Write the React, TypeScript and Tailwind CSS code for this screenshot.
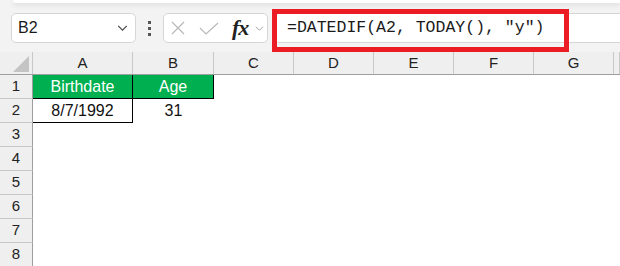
import React from "react";

const cols = [
  { label: "A", w: "w-[100px]" },
  { label: "B", w: "w-[81px]" },
  { label: "C", w: "w-[80px]" },
  { label: "D", w: "w-[80px]" },
  { label: "E", w: "w-[80px]" },
  { label: "F", w: "w-[80px]" },
  { label: "G", w: "w-[80px]" },
  { label: "", w: "flex-1" },
];

const rows = [1, 2, 3, 4, 5, 6, 7, 8];

function Chevron({ className }: { className?: string }) {
  return (
    <svg viewBox="0 0 12 7" className={className} fill="none" stroke="currentColor" strokeWidth="1.3">
      <path d="M1 1l5 5 5-5" />
    </svg>
  );
}

function Cell({ row, col }: { row: number; col: number }) {
  // only A1:B2 hold data, gridlines are off
  if (row === 1 && col === 0)
    return (
      <div className="w-[100px] h-full bg-[#00b050] text-white border-r border-b border-black flex items-center justify-center">
        Birthdate
      </div>
    );
  if (row === 1 && col === 1)
    return (
      <div className="w-[81px] h-full bg-[#00b050] text-white border-r border-b border-black flex items-center justify-center">
        Age
      </div>
    );
  if (row === 2 && col === 0)
    return (
      <div className="w-[100px] h-full border-r border-b border-black flex items-center justify-center text-[#111]">
        8/7/1992
      </div>
    );
  if (row === 2 && col === 1)
    return <div className="w-[81px] h-full flex items-center justify-center text-[#111]">31</div>;
  return <div className={`${cols[col].w} h-full`} />;
}

export default function App() {
  return (
    <div className="w-[620px] h-[266px] overflow-hidden bg-[#f3f3f3] font-['Liberation_Sans',Arial,sans-serif] relative">
      {/* ribbon edge */}
      <div className="ml-[13px] h-[3px] bg-white rounded-bl-md shadow-[0_2px_5px_rgba(0,0,0,0.12)]" />

      {/* formula toolbar */}
      <div className="h-[49px] pt-[10px] flex items-start">
        <div className="ml-[11px] w-[125px] h-[30px] bg-white border border-[#d6d6d6] rounded-[5px] flex items-center pl-[6px] pr-[7px]">
          <span className="text-[16px] text-[#1a1a1a] flex-1">B2</span>
          <Chevron className="w-[11px] h-[6px] text-[#444]" />
        </div>
        <div className="w-[27px] h-[30px] flex flex-col items-center justify-center gap-[3px]">
          <span className="w-[3px] h-[3px] bg-[#555]" />
          <span className="w-[3px] h-[3px] bg-[#555]" />
          <span className="w-[3px] h-[3px] bg-[#555]" />
        </div>
        <div className="w-[105px] h-[30px] bg-white border border-[#d6d6d6] rounded-[5px] flex items-center pl-[7px]">
          <svg viewBox="0 0 14 14" className="w-[14px] h-[14px]" stroke="#b9b9b9" strokeWidth="1.2">
            <path d="M1 1l12 12M13 1L1 13" />
          </svg>
          <svg viewBox="0 0 20 13" className="ml-[14px] w-[20px] h-[13px]" fill="none" stroke="#b9b9b9" strokeWidth="1.2">
            <path d="M1 6l6 6L19 1" />
          </svg>
          <span className="ml-[13px] font-['Liberation_Serif',serif] italic font-semibold text-[22px] leading-none text-[#222] tracking-[-1px]">fx</span>
          <Chevron className="ml-[7px] w-[9px] h-[5px] text-[#9a9a9a]" />
        </div>
        <div className="ml-[6px] flex-1 h-[30px] bg-white border border-[#d6d6d6] border-r-0 rounded-l-[5px] flex items-center pl-[12px]">
          <span className="font-['Liberation_Mono',monospace] text-[16.5px] text-[#1a1a1a] whitespace-pre">
            =DATEDIF(A2, TODAY(), "y")
          </span>
        </div>
      </div>

      {/* annotation */}
      <div className="absolute left-[272px] top-[9px] w-[297px] h-[43px] border-[5px] border-[#ec1c24]" />

      {/* column headers */}
      <div className="flex h-[23px] bg-[#efefef] border-b border-[#9e9e9e] text-[15px] text-[#222]">
        <div className="w-[33px] h-full border-r border-[#c8c8c8] flex items-end justify-end pr-[3px] pb-[2px]">
          <svg viewBox="0 0 16 16" className="w-[16px] h-[16px]">
            <path d="M16 0V16H0Z" fill="#c4c4c4" />
          </svg>
        </div>
        {cols.map((c, i) => (
          <div key={i} className={`${c.w} h-full border-r border-[#c8c8c8] flex items-center justify-center`}>
            {c.label}
          </div>
        ))}
      </div>

      {/* rows */}
      <div className="bg-white text-[16px]">
        {rows.map((r) => (
          <div key={r} className="flex h-[24px]">
            <div className="w-[33px] h-full bg-[#efefef] border-r border-b border-r-[#9e9e9e] border-b-[#c8c8c8] flex items-center justify-center text-[15px] text-[#222]">
              {r}
            </div>
            {cols.map((_, i) => (
              <Cell key={i} row={r} col={i} />
            ))}
          </div>
        ))}
      </div>
    </div>
  );
}
